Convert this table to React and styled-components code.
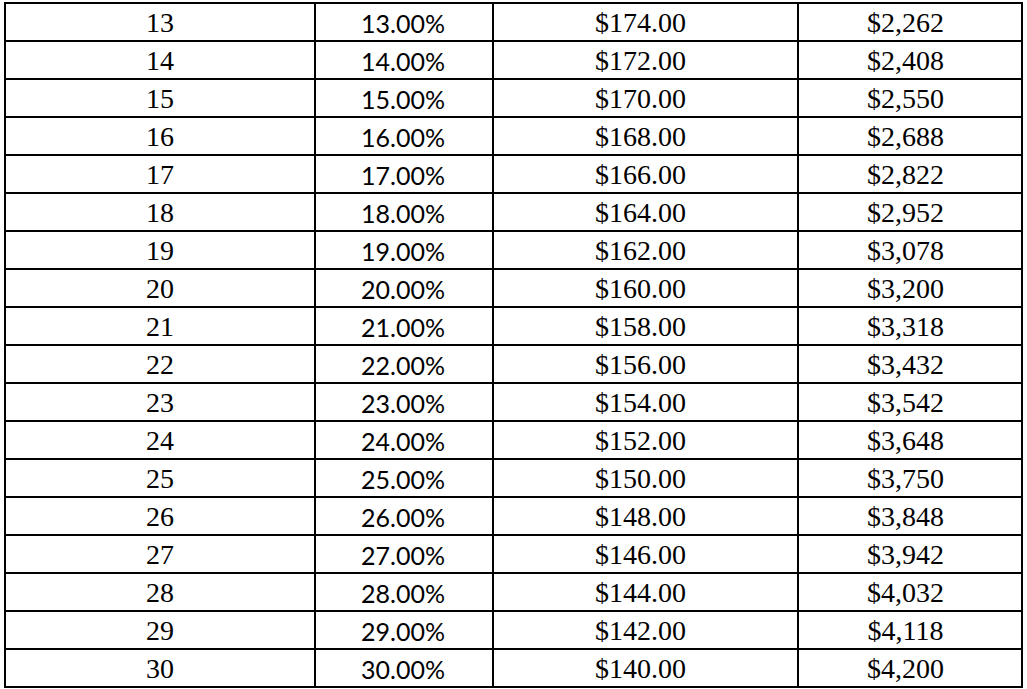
import styled, { createGlobalStyle } from "styled-components";

const GlobalStyle = createGlobalStyle`
  html, body {
    margin: 0;
    padding: 0;
    background: #ffffff;
  }
`;

const Page = styled.div`
  padding: 2px 0 0 4px;
  width: 1027px;
  height: 689px;
  box-sizing: border-box;
  overflow: hidden;
`;

const Table = styled.div`
  display: grid;
  grid-template-columns: 308px 176px 303px 222px;
  grid-auto-rows: 36px;
  gap: 2px;
  padding: 2px;
  background: #000000;
  width: fit-content;
`;

const Cell = styled.div`
  background: #ffffff;
  display: flex;
  align-items: center;
  justify-content: center;
  color: #000000;
  font-family: ${(p) =>
    p.$sans ? `"Lato", "Open Sans", sans-serif` : `"Liberation Serif", "Times New Roman", serif`};
  font-size: ${(p) => (p.$sans ? "25px" : "28px")};
  line-height: 1;
  padding-top: ${(p) => (p.$sans ? "2px" : "1px")};
  padding-right: ${(p) => p.$shift || 0}px;
`;

const rows = [];
for (let n = 13; n <= 30; n++) {
  const price = 200 - n * 2;
  rows.push({
    n,
    pct: `${n}.00%`,
    price: `$${price}.00`,
    total: `$${(n * price).toLocaleString("en-US")}`,
  });
}

export default function App() {
  return (
    <Page>
      <GlobalStyle />
      <Table>
        {rows.map((r) => [
          <Cell key={`a${r.n}`}>{r.n}</Cell>,
          <Cell key={`b${r.n}`} $sans $shift={2}>
            {r.pct}
          </Cell>,
          <Cell key={`c${r.n}`} $shift={10}>
            {r.price}
          </Cell>,
          <Cell key={`d${r.n}`} $shift={9}>
            {r.total}
          </Cell>,
        ])}
      </Table>
    </Page>
  );
}
